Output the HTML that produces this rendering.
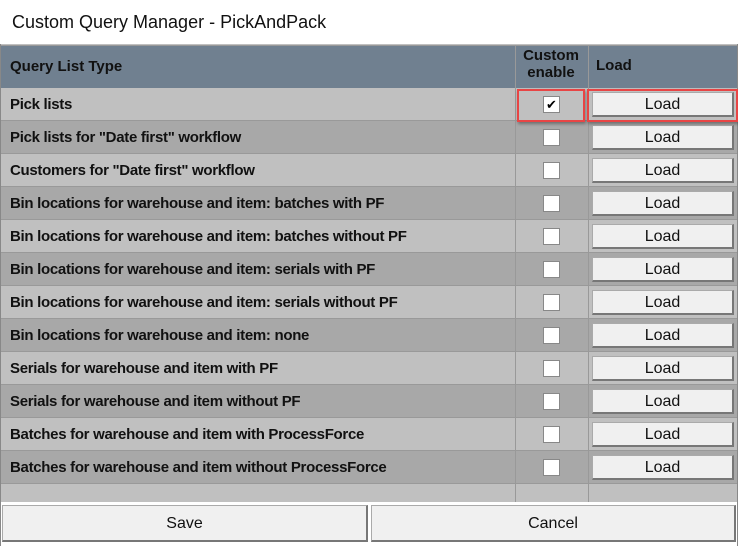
<html><head><style>
body{margin:0;width:738px;height:546px;background:#fff;font-family:"Liberation Sans",Arial,sans-serif;position:relative;overflow:hidden}
.title{position:absolute;left:12px;top:12px;font-size:18px;color:#111}
.win{position:absolute;left:0;top:44px;width:736px;height:502px;border-left:1px solid #888;border-right:1px solid #888;background:#c0c0c0}
.hdr{position:absolute;left:0;top:1px;width:736px;height:43px;background:#708090;border-top:1px solid #999}
.h{position:absolute;font-weight:bold;font-size:15px;color:#111}
.row{position:absolute;left:0;width:736px;height:32px;border-bottom:1px solid #999}
.row span{position:absolute;left:9px;top:8px;font-weight:bold;font-size:15px;color:#111;letter-spacing:-0.3px}
.vl{position:absolute;top:1px;width:1px;height:457px;background:#999}
.cb{position:absolute;left:542px;width:17px;height:17px;background:#fff;border:1px solid #888;box-sizing:border-box}
.lb{position:absolute;left:591px;width:142px;height:25px;background:#f0f0f0;border:1px solid #aaa;border-right:2px solid #777;border-bottom:2px solid #777;box-sizing:border-box;text-align:center;font-size:16px;line-height:24px;color:#111}
.btn{position:absolute;top:461px;height:37px;background:#f0f0f0;border:1px solid #aaa;border-right:2px solid #777;border-bottom:2px solid #777;box-sizing:border-box;text-align:center;font-size:16px;line-height:35px;color:#111}
.red{position:absolute;border:2px solid #e84545;box-sizing:border-box;top:45px;height:33px;box-shadow:1px 2px 3px rgba(0,0,0,.35)}
</style></head><body>
<div class="title">Custom Query Manager - PickAndPack</div>
<div class="win">
<div class="hdr"></div>
<div class="h" style="left:9px;top:14px">Query List Type</div>
<div class="h" style="left:518px;top:3px;line-height:17px;text-align:center;width:64px">Custom<br>enable</div>
<div class="h" style="left:595px;top:13px">Load</div>
<div class="row" style="top:44px;background:#c0c0c0"><span>Pick lists</span></div>
<div class="row" style="top:77px;background:#a8a8a8"><span>Pick lists for "Date first" workflow</span></div>
<div class="row" style="top:110px;background:#c0c0c0"><span>Customers for "Date first" workflow</span></div>
<div class="row" style="top:143px;background:#a8a8a8"><span>Bin locations for warehouse and item: batches with PF</span></div>
<div class="row" style="top:176px;background:#c0c0c0"><span>Bin locations for warehouse and item: batches without PF</span></div>
<div class="row" style="top:209px;background:#a8a8a8"><span>Bin locations for warehouse and item: serials with PF</span></div>
<div class="row" style="top:242px;background:#c0c0c0"><span>Bin locations for warehouse and item: serials without PF</span></div>
<div class="row" style="top:275px;background:#a8a8a8"><span>Bin locations for warehouse and item: none</span></div>
<div class="row" style="top:308px;background:#c0c0c0"><span>Serials for warehouse and item with PF</span></div>
<div class="row" style="top:341px;background:#a8a8a8"><span>Serials for warehouse and item without PF</span></div>
<div class="row" style="top:374px;background:#c0c0c0"><span>Batches for warehouse and item with ProcessForce</span></div>
<div class="row" style="top:407px;background:#a8a8a8"><span>Batches for warehouse and item without ProcessForce</span></div>
<div class="vl" style="left:514px"></div><div class="vl" style="left:587px"></div>
<div class="cb" style="top:52px;text-align:center;font-size:13px;line-height:15px">✔</div>
<div class="cb" style="top:85px"></div><div class="cb" style="top:118px"></div><div class="cb" style="top:151px"></div><div class="cb" style="top:184px"></div><div class="cb" style="top:217px"></div><div class="cb" style="top:250px"></div><div class="cb" style="top:283px"></div><div class="cb" style="top:316px"></div><div class="cb" style="top:349px"></div><div class="cb" style="top:382px"></div><div class="cb" style="top:415px"></div>
<div class="lb" style="top:48px">Load</div><div class="lb" style="top:81px">Load</div><div class="lb" style="top:114px">Load</div><div class="lb" style="top:147px">Load</div><div class="lb" style="top:180px">Load</div><div class="lb" style="top:213px">Load</div><div class="lb" style="top:246px">Load</div><div class="lb" style="top:279px">Load</div><div class="lb" style="top:312px">Load</div><div class="lb" style="top:345px">Load</div><div class="lb" style="top:378px">Load</div><div class="lb" style="top:411px">Load</div>
<div class="red" style="left:516px;width:68px"></div>
<div class="red" style="left:586px;width:151px"></div>
<div style="position:absolute;left:0;top:458px;width:736px;height:44px;background:#fff"></div>
<div class="btn" style="left:1px;width:366px">Save</div>
<div class="btn" style="left:370px;width:365px">Cancel</div>
</div>
</body></html>
